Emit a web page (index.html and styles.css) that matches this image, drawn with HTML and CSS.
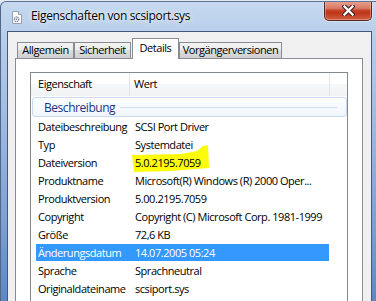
FILE: index.html
```html
<!DOCTYPE html>
<html lang="de">
<head>
    <meta charset="UTF-8">
    <meta name="viewport" content="width=device-width, initial-scale=1.0">
    <title>Eigenschaften von scsiport.sys</title>
    <link rel="stylesheet" href="styles.css">
</head>
<body>
    <div class="window">
        <div class="titlebar">
            <svg class="app-icon" width="12" height="13" viewBox="0 0 12 13">
                <path d="M1.5 .5h6l3 3v9h-9z" fill="#fff" stroke="#98a2ae"/>
                <path d="M7.5 .5v3h3" fill="#e4e8ee" stroke="#98a2ae"/>
                <circle cx="5.5" cy="8.3" r="2.2" fill="none" stroke="#7b8899" stroke-width="1.5" stroke-dasharray="1.1 0.6"/>
                <circle cx="5.5" cy="8.3" r="0.8" fill="#7b8899"/>
            </svg>
            <span class="title">Eigenschaften von scsiport.sys</span>
            <div class="close">
                <svg width="13" height="11" viewBox="0 0 13 11">
                    <path d="M2.5 1.5 L10.5 9.5 M10.5 1.5 L2.5 9.5" stroke="#3f1a15" stroke-width="4.4" stroke-linecap="square"/>
                    <path d="M2.5 1.5 L10.5 9.5 M10.5 1.5 L2.5 9.5" stroke="#fff" stroke-width="2.4" stroke-linecap="square"/>
                </svg>
            </div>
        </div>

        <div class="client">
            <div class="tabs">
                <div class="tab tab-general">Allgemein</div>
                <div class="tab tab-security">Sicherheit</div>
                <div class="tab tab-details active">Details</div>
                <div class="tab tab-prev">Vorgängerversionen</div>
            </div>
            <div class="panel">
                <div class="listview">
                    <div class="lv-header">
                        <div class="col col-prop">Eigenschaft</div>
                        <div class="col col-val">Wert</div>
                        <div class="col col-rest"></div>
                    </div>
                    <div class="group">
                        <span>Beschreibung</span>
                        <i class="group-line"></i>
                    </div>
                    <div class="row"><span class="name">Dateibeschreibung</span><span class="val">SCSI Port Driver</span></div>
                    <div class="row"><span class="name">Typ</span><span class="val">Systemdatei</span></div>
                    <div class="row"><span class="name">Dateiversion</span><span class="val marked">5.0.2195.7059</span></div>
                    <div class="row"><span class="name">Produktname</span><span class="val">Microsoft(R) Windows (R) 2000 Oper...</span></div>
                    <div class="row"><span class="name">Produktversion</span><span class="val">5.00.2195.7059</span></div>
                    <div class="row"><span class="name">Copyright</span><span class="val">Copyright (C) Microsoft Corp. 1981-1999</span></div>
                    <div class="row"><span class="name">Größe</span><span class="val">72,6 KB</span></div>
                    <div class="row selected"><span class="name">Änderungsdatum</span><span class="val">14.07.2005 05:24</span></div>
                    <div class="row"><span class="name">Sprache</span><span class="val">Sprachneutral</span></div>
                    <div class="row"><span class="name">Originaldateiname</span><span class="val">scsiport.sys</span></div>
                </div>
            </div>
        </div>
    </div>
</body>
</html>
```

FILE: styles.css
```css
* {
    box-sizing: border-box;
}
body {
    margin: 0;
    width: 376px;
    height: 301px;
    overflow: hidden;
    background-color: #e3e9f1;
    font-family: "Open Sans", "Segoe UI", sans-serif;
    font-size: 11px;
    letter-spacing: -0.45px;
    color: #000;
}

/* glass frame */
.window {
    margin-top: 1px;
    height: 300px;
    display: flex;
    flex-direction: column;
    padding: 0 4px 0 6px;
    border-top: 1px solid #5d7396;
    border-left: 1px solid #4f6688;
    border-top-left-radius: 6px;
    background: linear-gradient(180deg, #c6d9f0 0%, #b7cdea 12%, #a3bee4 35%, #7fa3d6 70%, #5b88c6 100%);
    overflow: hidden;
}
.titlebar {
    height: 29px;
    flex-shrink: 0;
    display: flex;
    align-items: flex-start;
}
.app-icon {
    margin: 9px 0 0 4px;
}
.title {
    margin: 6px 0 0 8px;
    font-size: 12px;
    letter-spacing: -0.35px;
    line-height: 16px;
    text-shadow: 0 0 6px rgba(255,255,255,0.9), 0 0 2px rgba(255,255,255,0.8);
}
.close {
    margin-left: auto;
    margin-top: -1px;
    width: 48px;
    height: 20px;
    display: flex;
    align-items: center;
    justify-content: center;
    border: 1px solid #5a2620;
    border-top: none;
    border-radius: 0 0 5px 5px;
    background: linear-gradient(180deg, #e8a595 0%, #d97a65 38%, #c64329 50%, #bd3519 62%, #d0603f 100%);
    box-shadow: inset 0 0 0 1px rgba(255,200,190,0.4), 0 0 0 1px rgba(255,255,255,0.35);
}

/* dialog body */
.client {
    flex: 1;
    display: flex;
    flex-direction: column;
    background-color: #f0f0f0;
    border: 1px solid #47587a;
    border-bottom: none;
}
.tabs {
    height: 26px;
    flex-shrink: 0;
    display: flex;
    align-items: flex-end;
    padding-left: 9px;
}
.tab {
    height: 16px;
    line-height: 14px;
    text-align: center;
    border: 1px solid #898c95;
    border-bottom: none;
    background: linear-gradient(180deg, #f3f3f3 0%, #ebebeb 45%, #dddddd 50%, #cfcfcf 100%);
    white-space: nowrap;
}
.tab-general { width: 57px; }
.tab-security { width: 57px; }
.tab-details { width: 47px; }
.tab-prev { width: 103px; }
.tab.active {
    position: relative;
    z-index: 1;
    height: 21px;
    line-height: 18px;
    margin: 0 0 -1px 1px;
    background: #fff;
}
.panel {
    flex: 1;
    margin: 0 8px 0 7px;
    padding: 13px 14px 0 14px;
    border: 1px solid #898c95;
    border-bottom: none;
    background-color: #fff;
    display: flex;
}

/* list view */
.listview {
    flex: 1;
    border: 1px solid #828790;
    border-bottom: none;
    background-color: #fff;
}
.lv-header {
    display: flex;
    height: 23px;
    background: linear-gradient(180deg, #ffffff 0%, #ffffff 45%, #f7f8f9 50%, #f1f2f4 100%);
}
.col {
    line-height: 22px;
    border-right: 1px solid #e2e4e8;
}
.col-prop {
    width: 99px;
    padding-left: 7px;
}
.col-val {
    width: 200px;
    padding-left: 4px;
}
.col-rest {
    flex: 1;
    border-right: none;
}
.group {
    height: 20px;
    margin: 1px 0 1px 1px;
    padding-left: 11px;
    display: flex;
    align-items: center;
    border: 1px solid #c7dbf3;
    border-radius: 3px;
    background: linear-gradient(180deg, #fbfdff 0%, #f1f6fd 100%);
    color: #1e3287;
    font-size: 12px;
}
.group-line {
    flex: 1;
    height: 1px;
    margin: 0 9px 0 5px;
    background-color: #d2dfef;
}
.row {
    display: grid;
    grid-template-columns: 94px 1fr;
    width: 293px;
    height: 17px;
    margin: 0 0 1px 5px;
    line-height: 17px;
    white-space: nowrap;
}
.name {
    padding-left: 2px;
}
.val {
    padding-left: 5px;
}
.row.selected {
    background-color: #3399ff;
    color: #fff;
}

/* yellow marker drawn over the screenshot */
.val.marked {
    position: relative;
    z-index: 0;
}
.val.marked::before {
    content: "";
    position: absolute;
    z-index: -1;
    left: 1px;
    top: -10px;
    width: 80px;
    height: 29px;
    background-color: #fbfb0a;
    clip-path: polygon(1px 11px, 50px 10px, 66px 7px, 72px 2px, 77px 1px, 78px 24px, 40px 27px, 3px 28px);
}
```
